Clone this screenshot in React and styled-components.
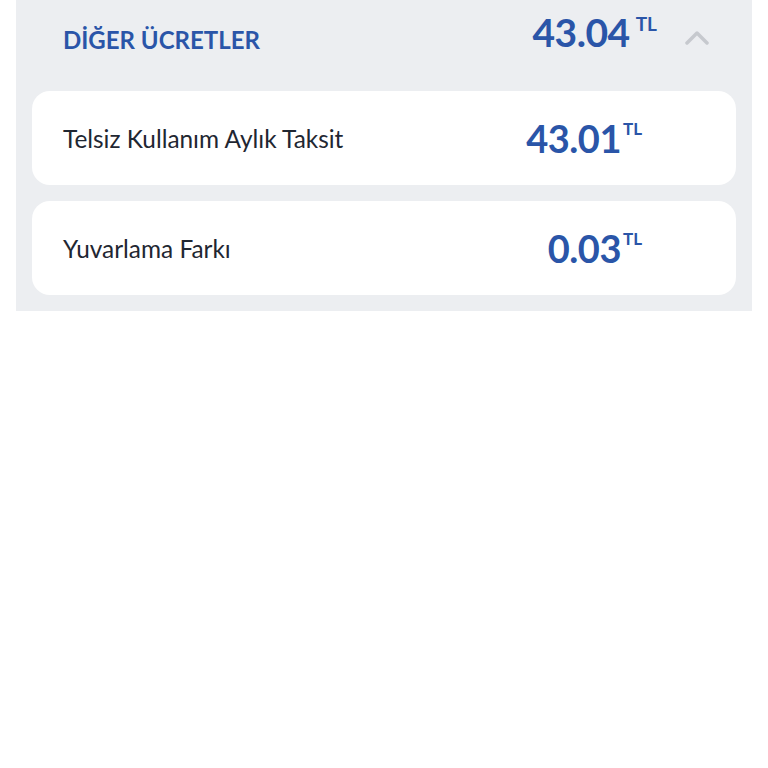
import React from 'react';
import styled, { createGlobalStyle } from 'styled-components';

const GlobalStyle = createGlobalStyle`
  body {
    margin: 0;
    background: #ffffff;
    font-family: 'Lato', 'Liberation Sans', sans-serif;
  }
`;

const Panel = styled.section`
  margin: 0 16px;
  padding: 0 16px 16px;
  background: #eceef1;
  display: flex;
  flex-direction: column;
  gap: 16px;
`;

const Header = styled.div`
  height: 75px;
  display: flex;
  align-items: center;
  padding: 0 27px 0 31px;
`;

const Title = styled.h2`
  flex: 1;
  margin: 0;
  padding-top: 3px;
  font-size: 24px;
  font-weight: 700;
  color: #2a55a8;
`;

const Amount = styled.div`
  display: flex;
  align-items: flex-start;
  color: #2a55a8;
  font-weight: 700;
  line-height: 1;
  margin-bottom: ${(p) => p.lift || 0}px;
`;

const Value = styled.span`
  font-size: ${(p) => p.size}px;
  letter-spacing: -0.5px;
`;

const Currency = styled.span`
  font-size: ${(p) => p.size}px;
  margin-left: ${(p) => p.gap}px;
  margin-top: 1px;
`;

const Chevron = styled.svg`
  margin-left: 28px;
  margin-bottom: 2px;
  width: 24px;
  height: 16px;
`;

const Card = styled.div`
  height: 94px;
  background: #ffffff;
  border-radius: 18px;
  display: flex;
  align-items: center;
  padding: 0 94px 0 31px;
`;

const Label = styled.span`
  flex: 1;
  font-size: 24.4px;
  color: #1f2732;
`;

const items = [
  { label: 'Telsiz Kullanım Aylık Taksit', value: '43.01' },
  { label: 'Yuvarlama Farkı', value: '0.03' },
];

export default function App() {
  return (
    <>
      <GlobalStyle />
      <Panel>
        <Header>
          <Title>DİĞER ÜCRETLER</Title>
          <Amount lift={10}>
            <Value size={39}>43.04</Value>
            <Currency size={19} gap={6}>TL</Currency>
          </Amount>
          <Chevron viewBox="0 0 24 16">
            <polyline points="2,14 12,4 22,14" fill="none" stroke="#c6c9ce" strokeWidth="3.5" strokeLinecap="round" strokeLinejoin="round" />
          </Chevron>
        </Header>
        {items.map((it) => (
          <Card key={it.label}>
            <Label>{it.label}</Label>
            <Amount>
              <Value size={38}>{it.value}</Value>
              <Currency size={17} gap={2}>TL</Currency>
            </Amount>
          </Card>
        ))}
      </Panel>
    </>
  );
}
